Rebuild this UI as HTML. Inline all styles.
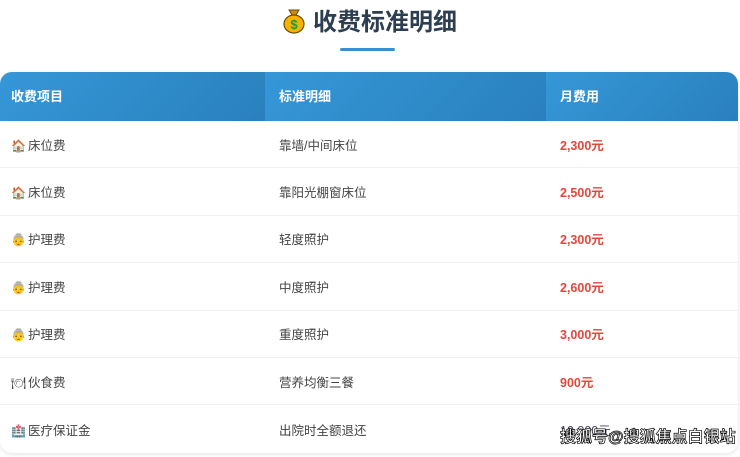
<!DOCTYPE html>
<html><head><meta charset="utf-8"><style>
*{margin:0;padding:0;box-sizing:border-box}
body{width:740px;height:457px;background:#fff;font-family:"Liberation Sans","Noto Sans CJK SC",sans-serif;position:relative;overflow:hidden}
.title{position:absolute;top:6px;left:0;width:740px;text-align:center;font-size:24px;font-weight:bold;color:#2c3e50;line-height:34px}
.title .ic{display:inline-block;width:22px;height:26px;vertical-align:-4px;margin-right:8px}
.ul{position:absolute;left:340px;top:48px;width:55px;height:3px;background:#3a8fd0;border-radius:2px}
.tbl{position:absolute;left:0;top:72px;width:738px;height:381px;border-radius:12px;overflow:hidden;box-shadow:0 1px 4px rgba(0,0,0,.12);background:#fff}
.hd{display:flex;height:49px}
.hd div{color:#fff;font-weight:bold;font-size:13px;line-height:49px;background:linear-gradient(135deg,#3597d8,#2a80bd)}
.c1{width:265px;padding-left:11px}.c2{width:281px;padding-left:14px}.c3{width:192px;padding-left:14px}
.row{display:flex;height:47.4px;border-bottom:1px solid #eef0f2;font-size:12.5px;color:#444;align-items:center}
.row:last-child{border-bottom:none}
.red{color:#e2473b;font-weight:bold}
.e{display:inline-block;width:14px;font-size:12px;margin-right:3px}
.wm{position:absolute;left:560px;top:428px;font-size:16px;font-weight:bold;color:#fff;-webkit-text-stroke:0.7px #000;white-space:nowrap;line-height:20px}
</style></head><body>
<div class="title"><svg class="ic" viewBox="0 0 22 26"><path d="M6 2h10l-3 5h-4z" fill="#c98a1a" stroke="#6b4a00" stroke-width="1"/><ellipse cx="11" cy="16" rx="10" ry="9" fill="#f5b400" stroke="#6b4a00" stroke-width="1.2"/><text x="11" y="21" text-anchor="middle" font-size="13" font-weight="bold" fill="#1a9a3a" font-family="Liberation Sans">$</text></svg>收费标准明细</div>
<div class="ul"></div>
<div class="tbl">
<div class="hd"><div class="c1">收费项目</div><div class="c2">标准明细</div><div class="c3">月费用</div></div>
<div class="row"><div class="c1"><span class="e">🏠</span>床位费</div><div class="c2">靠墙/中间床位</div><div class="c3 red">2,300元</div></div>
<div class="row"><div class="c1"><span class="e">🏠</span>床位费</div><div class="c2">靠阳光棚窗床位</div><div class="c3 red">2,500元</div></div>
<div class="row"><div class="c1"><span class="e">👵</span>护理费</div><div class="c2">轻度照护</div><div class="c3 red">2,300元</div></div>
<div class="row"><div class="c1"><span class="e">👵</span>护理费</div><div class="c2">中度照护</div><div class="c3 red">2,600元</div></div>
<div class="row"><div class="c1"><span class="e">👵</span>护理费</div><div class="c2">重度照护</div><div class="c3 red">3,000元</div></div>
<div class="row"><div class="c1"><span class="e">🍽</span>伙食费</div><div class="c2">营养均衡三餐</div><div class="c3 red">900元</div></div>
<div class="row"><div class="c1"><span class="e">🏥</span>医疗保证金</div><div class="c2">出院时全额退还</div><div class="c3" style="color:#445">10,000元</div></div>
</div>
<div class="wm">搜狐号@搜狐焦点白银站</div>
</body></html>
